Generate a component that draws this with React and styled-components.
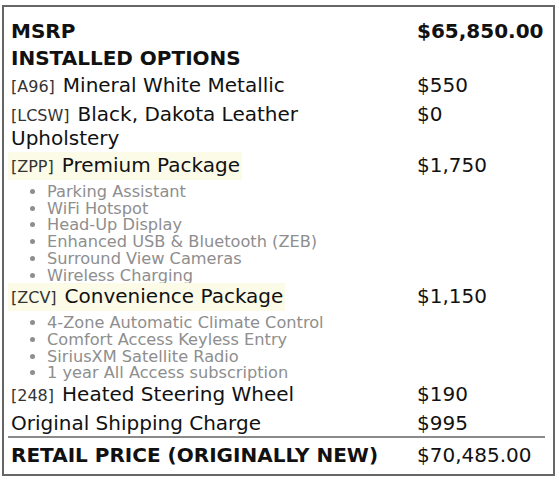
import React from 'react'
import styled, { createGlobalStyle } from 'styled-components'

const GlobalStyle = createGlobalStyle`
  html, body {
    margin: 0;
    padding: 0;
    background: #fff;
  }
  body {
    font-family: "DejaVu Sans", Verdana, sans-serif;
    color: #111;
  }
`

const Box = styled.div`
  box-sizing: border-box;
  width: 553px;
  margin: 5px 0 0 2px;
  padding: 10px 8px 6px 4px;
  border: 2px solid #666;
`

const Row = styled.div`
  display: grid;
  grid-template-columns: 1fr 131px;
  align-items: baseline;
  ${({ total }) => total && `
    padding-top: 3px;
    border-top: 2px solid #8a8a8a;
  `}
`

const NameCell = styled.div`
  padding: 3px 3px 2px;
  font-size: 20px;
  line-height: 22px;
  font-weight: ${({ bold }) => (bold ? 700 : 400)};
`

const PriceCell = styled.div`
  padding: 3px 3px 2px;
  font-size: 20px;
  line-height: 22px;
  font-weight: ${({ bold }) => (bold ? 700 : 400)};
  white-space: nowrap;
`

const Title = styled.span`
  ${({ highlight }) => highlight && `
    display: inline-block;
    margin: -2px 0 -2px -3px;
    padding: 2px 2px 2px 3px;
    background: #fcfbe8;
  `}
`

const Code = styled.span`
  font-size: 16px;
  color: #333;
  margin-right: 8px;
`

const Features = styled.ul`
  margin: 6px 0 -4px;
  padding-left: 36px;
  list-style: disc;
  color: #8e8e8e;
  font-size: 16.2px;
  line-height: 16.7px;
`

const rows = [
  { label: 'MSRP', price: '$65,850.00', head: true },
  { label: 'INSTALLED OPTIONS', head: true },
  { code: 'A96', label: 'Mineral White Metallic', price: '$550' },
  { code: 'LCSW', label: 'Black, Dakota Leather Upholstery', price: '$0' },
  {
    code: 'ZPP',
    label: 'Premium Package',
    price: '$1,750',
    items: [
      'Parking Assistant',
      'WiFi Hotspot',
      'Head-Up Display',
      'Enhanced USB & Bluetooth (ZEB)',
      'Surround View Cameras',
      'Wireless Charging',
    ],
  },
  {
    code: 'ZCV',
    label: 'Convenience Package',
    price: '$1,150',
    items: [
      '4-Zone Automatic Climate Control',
      'Comfort Access Keyless Entry',
      'SiriusXM Satellite Radio',
      '1 year All Access subscription',
    ],
  },
  { code: '248', label: 'Heated Steering Wheel', price: '$190' },
  { label: 'Original Shipping Charge', price: '$995' },
]

const App = () => (
  <>
    <GlobalStyle />
    <Box>
      {rows.map((row) => (
        <Row key={row.label}>
          <NameCell bold={row.head}>
            <Title highlight={!!row.items}>
              {row.code && <Code>[{row.code}]</Code>}
              {row.label}
            </Title>
            {row.items && (
              <Features>
                {row.items.map((item) => <li key={item}>{item}</li>)}
              </Features>
            )}
          </NameCell>
          <PriceCell bold={row.head}>{row.price}</PriceCell>
        </Row>
      ))}
      <Row total>
        <NameCell bold>RETAIL PRICE (ORIGINALLY NEW)</NameCell>
        <PriceCell>$70,485.00</PriceCell>
      </Row>
    </Box>
  </>
)

export default App
